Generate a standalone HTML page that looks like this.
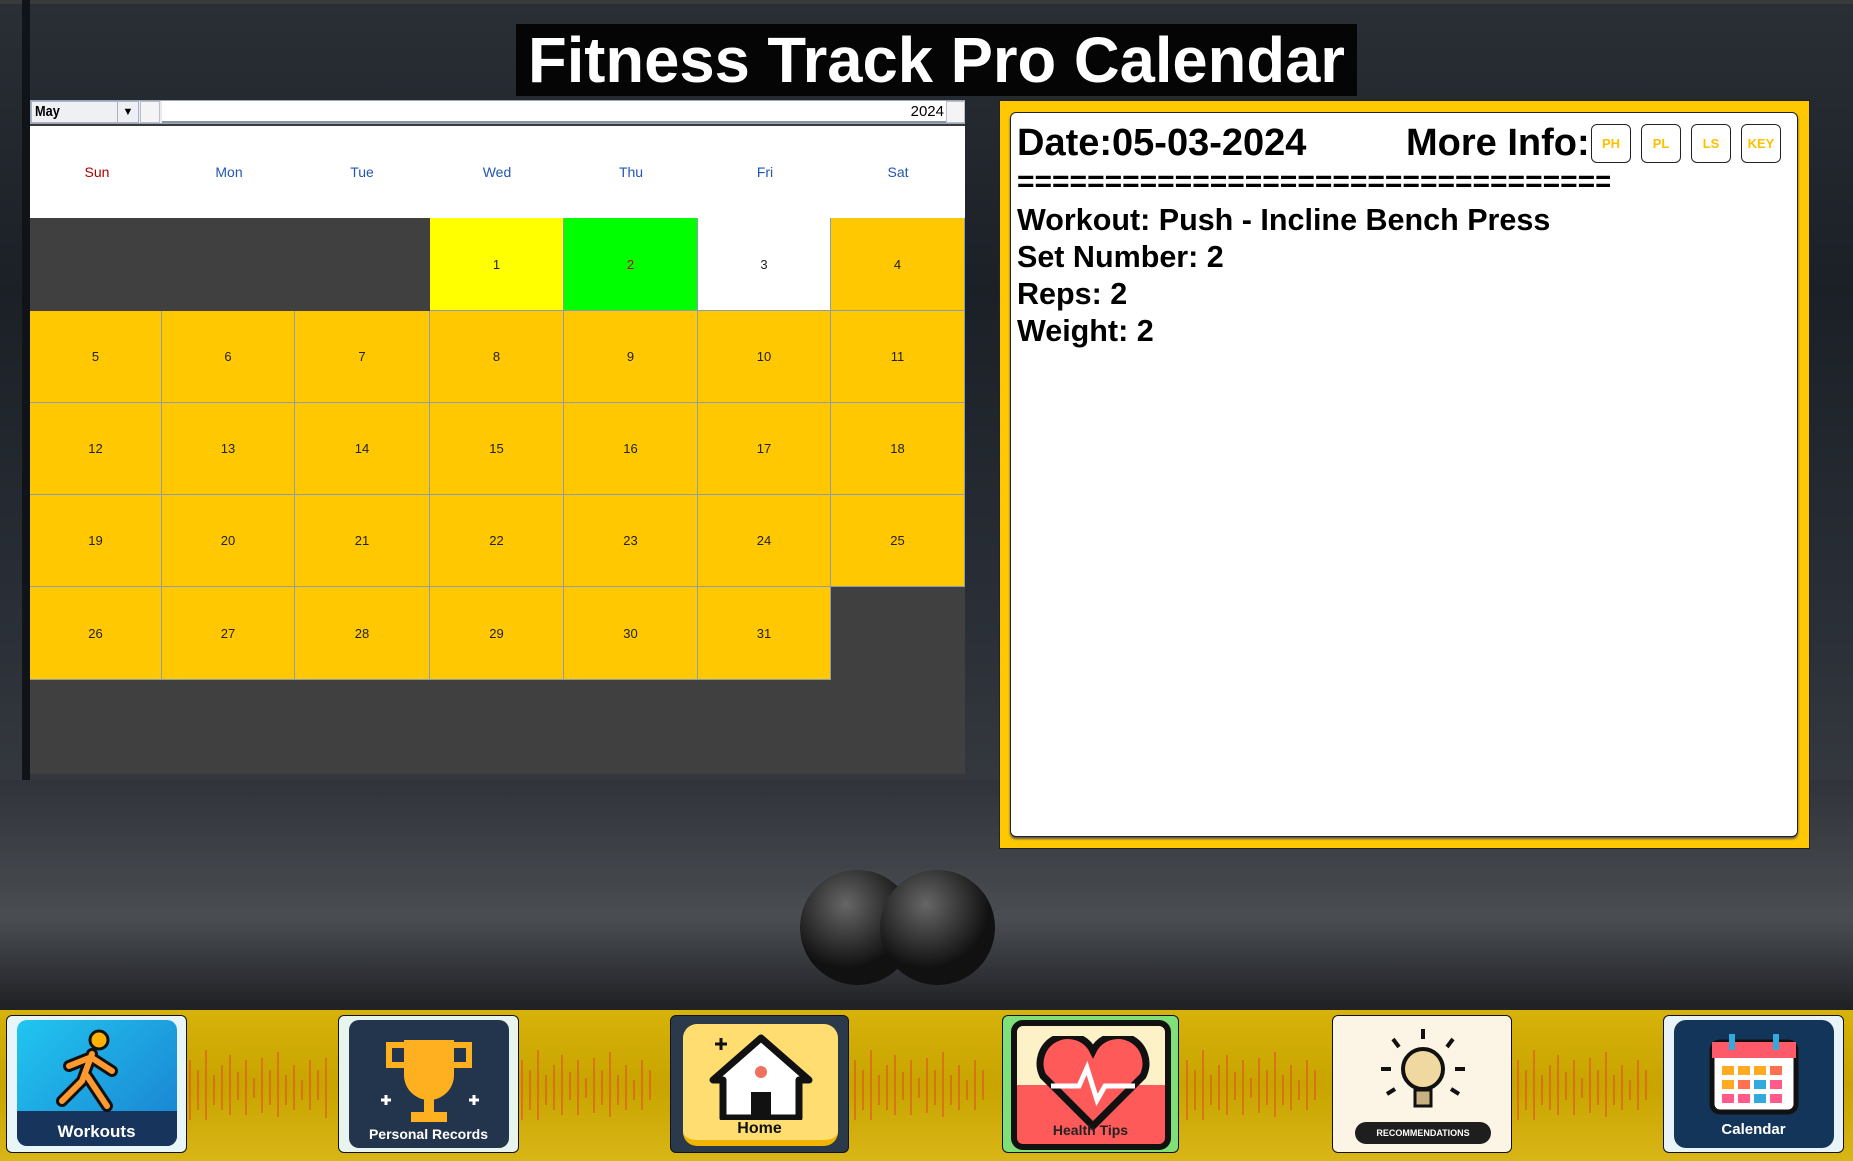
<!DOCTYPE html>
<html><head><meta charset="utf-8"><style>
*{margin:0;padding:0;box-sizing:border-box}
body{width:1853px;height:1161px;overflow:hidden;position:relative;font-family:"Liberation Sans",Arial,sans-serif;
background:linear-gradient(180deg,#2a2f36 0%,#1b2027 25%,#2b3038 55%,#3a3d42 75%,#505257 85%,#2a2c30 100%)}
.a{position:absolute}
.n{display:inline-block;transform-origin:left center}
.cell{position:absolute;background:#ffc800;border-right:1px solid #8d9bb0;border-bottom:1px solid #8d9bb0;font-size:13px;color:#222;display:flex;align-items:center;justify-content:center}
.dn{position:absolute;top:164px;font-size:14px;color:#2256b0;width:134px;text-align:center}
.btn{position:absolute;top:124px;width:40px;height:39px;border:1.5px solid #222;border-radius:6px;background:#fff;color:#ffc000;font-weight:bold;font-size:13px;display:flex;align-items:center;justify-content:center}
.info{position:absolute;left:1017px;font-weight:bold;color:#000;white-space:nowrap}
.tile{position:absolute;top:1015px;height:138px;border-radius:6px;overflow:hidden;border:1px solid #111}
.lab{position:absolute;bottom:10px;left:0;right:0;text-align:center;font-weight:bold;color:#fff;font-size:15px}
</style></head><body>
<div class="a" style="left:0;top:0;width:1853px;height:4px;background:#3a3a3a"></div>
<div class="a" style="left:22px;top:0;width:8px;height:1000px;background:#101318"></div>
<div class="a" style="left:0;top:780px;width:1853px;height:230px;background:linear-gradient(180deg,#30343a,#4a4d52 60%,#1e2024)"></div>
<div class="a" style="left:800px;top:870px;width:115px;height:115px;border-radius:50%;background:radial-gradient(circle at 40% 30%,#666,#111 60%)"></div>
<div class="a" style="left:880px;top:870px;width:115px;height:115px;border-radius:50%;background:radial-gradient(circle at 40% 30%,#666,#111 60%)"></div>
<!-- title -->
<div class="a" style="left:516px;top:24px;width:841px;height:72px;background:#050505"></div>
<div class="a" style="left:528px;top:20px;font-size:64px;font-weight:bold;color:#fff;white-space:nowrap;line-height:80px"><span class="n" style="transform:scaleX(0.99)">Fitness Track Pro Calendar</span></div>
<!-- calendar -->
<div class="a" style="left:30px;top:100px;width:935px;height:674px;background:#404040"></div>
<div class="a" style="left:30px;top:100px;width:935px;height:24px;background:#e8ecf2;border:1px solid #9aa6b8"></div>
<div class="a" style="left:31px;top:101px;width:90px;height:22px;background:#eef0f4;border:1px solid #a8b4c6;font-size:15px;font-weight:bold;line-height:20px;padding-left:3px"><span class="n" style="transform:scaleX(0.85)">May</span></div>
<div class="a" style="left:117px;top:101px;width:22px;height:22px;background:#eef0f4;border:1px solid #a8b4c6;font-size:11px;text-align:center;line-height:20px">▼</div>
<div class="a" style="left:140px;top:101px;width:20px;height:22px;background:#f4f4f4;border:1px solid #b8c0cc"></div>
<div class="a" style="left:162px;top:101px;width:784px;height:22px;background:#fff;border-bottom:2px solid #8a94a8;text-align:right;font-size:15px;line-height:22px;padding-right:2px">2024</div>
<div class="a" style="left:946px;top:101px;width:19px;height:22px;background:#f4f4f4;border:1px solid #b8c0cc"></div>
<div class="a" style="left:30px;top:124px;width:935px;height:94px;background:#fff;border-top:2px solid #3a3a3a"></div>
<div class="dn" style="left:30px;color:#b00000">Sun</div>
<div class="dn" style="left:162px">Mon</div>
<div class="dn" style="left:295px">Tue</div>
<div class="dn" style="left:430px">Wed</div>
<div class="dn" style="left:564px">Thu</div>
<div class="dn" style="left:698px">Fri</div>
<div class="dn" style="left:831px">Sat</div>
<div class="cell" style="left:430px;top:218px;width:134px;height:93px;background:#ffff00">1</div>
<div class="cell" style="left:564px;top:218px;width:134px;height:93px;background:#00ff00;color:#c00">2</div>
<div class="cell" style="left:698px;top:218px;width:133px;height:93px;background:#fff">3</div>
<div class="cell" style="left:831px;top:218px;width:134px;height:93px">4</div>

<div class="cell" style="left:30px;top:311px;width:132px;height:92px">5</div>
<div class="cell" style="left:162px;top:311px;width:133px;height:92px">6</div>
<div class="cell" style="left:295px;top:311px;width:135px;height:92px">7</div>
<div class="cell" style="left:430px;top:311px;width:134px;height:92px">8</div>
<div class="cell" style="left:564px;top:311px;width:134px;height:92px">9</div>
<div class="cell" style="left:698px;top:311px;width:133px;height:92px">10</div>
<div class="cell" style="left:831px;top:311px;width:134px;height:92px">11</div>

<div class="cell" style="left:30px;top:403px;width:132px;height:92px">12</div>
<div class="cell" style="left:162px;top:403px;width:133px;height:92px">13</div>
<div class="cell" style="left:295px;top:403px;width:135px;height:92px">14</div>
<div class="cell" style="left:430px;top:403px;width:134px;height:92px">15</div>
<div class="cell" style="left:564px;top:403px;width:134px;height:92px">16</div>
<div class="cell" style="left:698px;top:403px;width:133px;height:92px">17</div>
<div class="cell" style="left:831px;top:403px;width:134px;height:92px">18</div>

<div class="cell" style="left:30px;top:495px;width:132px;height:92px">19</div>
<div class="cell" style="left:162px;top:495px;width:133px;height:92px">20</div>
<div class="cell" style="left:295px;top:495px;width:135px;height:92px">21</div>
<div class="cell" style="left:430px;top:495px;width:134px;height:92px">22</div>
<div class="cell" style="left:564px;top:495px;width:134px;height:92px">23</div>
<div class="cell" style="left:698px;top:495px;width:133px;height:92px">24</div>
<div class="cell" style="left:831px;top:495px;width:134px;height:92px">25</div>

<div class="cell" style="left:30px;top:587px;width:132px;height:93px">26</div>
<div class="cell" style="left:162px;top:587px;width:133px;height:93px">27</div>
<div class="cell" style="left:295px;top:587px;width:135px;height:93px">28</div>
<div class="cell" style="left:430px;top:587px;width:134px;height:93px">29</div>
<div class="cell" style="left:564px;top:587px;width:134px;height:93px">30</div>
<div class="cell" style="left:698px;top:587px;width:133px;height:93px">31</div>
<!-- info panel -->
<div class="a" style="left:999px;top:100px;width:811px;height:749px;background:#ffc800;border:1px solid #222"></div>
<div class="a" style="left:1010px;top:112px;width:788px;height:725px;background:#fff;border:1.5px solid #222;border-radius:6px;box-shadow:0 2px 2px #555"></div>
<div class="info" style="top:118px;font-size:38px;line-height:50px"><span class="n" style="transform:scaleX(1.0)">Date:05-03-2024</span></div>
<div class="info" style="left:1406px;top:118px;font-size:38px;line-height:50px"><span class="n" style="transform:scaleX(1.0)">More Info:</span></div>
<div class="btn" style="left:1591px">PH</div>
<div class="btn" style="left:1641px">PL</div>
<div class="btn" style="left:1691px">LS</div>
<div class="btn" style="left:1741px">KEY</div>
<div class="info" style="top:165px;font-size:30px;line-height:34px;overflow:hidden;width:593px">===================================</div>
<div class="info" style="top:202px;font-size:30.5px;line-height:36px">Workout: Push - Incline Bench Press</div>
<div class="info" style="top:239px;font-size:30.5px;line-height:36px">Set Number: 2</div>
<div class="info" style="top:276px;font-size:30.5px;line-height:36px">Reps: 2</div>
<div class="info" style="top:313px;font-size:30.5px;line-height:36px">Weight: 2</div>
<!-- bottom bar -->
<div class="a" style="left:0;top:1008px;width:1853px;height:153px;background:linear-gradient(180deg,#d6b20a,#c9a400 50%,#d8b616);border-top:2px solid #222"></div>
<svg class="a" style="left:0;top:1030px" width="1853" height="110">
<g stroke="#e0402a" stroke-width="1.2" opacity="0.8">
<path d="M190 30v60M198 40v40M206 20v70M214 45v30M222 35v45M230 25v60M238 42v28M246 30v55M254 48v20M262 28v55M270 40v35M278 22v65M286 45v30M294 35v45M302 50v20M310 30v50M318 40v30M326 28v60"/>
<path d="M522 30v60M530 40v40M538 20v70M546 45v30M554 35v45M562 25v60M570 42v28M578 30v55M586 48v20M594 28v55M602 40v35M610 22v65M618 45v30M626 35v45M634 50v20M642 30v50M650 40v30"/>
<path d="M855 30v60M863 40v40M871 20v70M879 45v30M887 35v45M895 25v60M903 42v28M911 30v55M919 48v20M927 28v55M935 40v35M943 22v65M951 45v30M959 35v45M967 50v20M975 30v50M983 40v30"/>
<path d="M1187 30v60M1195 40v40M1203 20v70M1211 45v30M1219 35v45M1227 25v60M1235 42v28M1243 30v55M1251 48v20M1259 28v55M1267 40v35M1275 22v65M1283 45v30M1291 35v45M1299 50v20M1307 30v50M1315 40v30"/>
<path d="M1518 30v60M1526 40v40M1534 20v70M1542 45v30M1550 35v45M1558 25v60M1566 42v28M1574 30v55M1582 48v20M1590 28v55M1598 40v35M1606 22v65M1614 45v30M1622 35v45M1630 50v20M1638 30v50M1646 40v30"/>
</g></svg>
<div class="tile" style="left:6px;width:181px;background:#e8f6fa">
 <div class="a" style="left:10px;top:4px;width:160px;height:126px;border-radius:10px;background:linear-gradient(135deg,#21c6f0,#1a7fd0)"></div>
 <div class="a" style="left:10px;top:95px;width:160px;height:35px;background:#16345c;border-radius:0 0 10px 10px"></div>
 <svg class="a" style="left:40px;top:10px" width="90" height="90"><circle cx="52" cy="14" r="9" fill="#ffb300" stroke="#111" stroke-width="3"/><path d="M45 28 L35 55 L15 75 M40 50 L60 80 M45 32 L65 45 M42 32 L22 40" stroke="#111" stroke-width="12" fill="none" stroke-linecap="round"/><path d="M45 28 L35 55 L15 75 M40 50 L60 80 M45 32 L65 45 M42 32 L22 40" stroke="#ff9a30" stroke-width="6" fill="none" stroke-linecap="round"/></svg>
 <div class="lab" style="font-size:17px">Workouts</div></div>
<div class="tile" style="left:338px;width:181px;background:#e8f5ee">
 <div class="a" style="left:10px;top:4px;width:160px;height:128px;border-radius:10px;background:#23354d"></div>
 <svg class="a" style="left:30px;top:14px" width="120" height="100"><path d="M35 10h50v35a25 25 0 0 1-50 0z" fill="#ffb020"/><path d="M35 15h-15v20h15M85 15h15v20h-15" stroke="#ffb020" stroke-width="6" fill="none"/><rect x="55" y="68" width="10" height="14" fill="#ffb020"/><rect x="42" y="82" width="36" height="10" fill="#ffb020"/><path d="M12 70h10M17 65v10M100 70h10M105 65v10" stroke="#fff" stroke-width="3"/></svg>
 <div class="lab" style="font-size:14px">Personal Records</div></div>
<div class="tile" style="left:670px;width:179px;background:#2b3a4a">
 <div class="a" style="left:12px;top:8px;width:155px;height:122px;border-radius:14px;background:#ffdd70;border-bottom:6px solid #f2b400"></div>
 <svg class="a" style="left:30px;top:14px" width="120" height="90"><path d="M60 8 L12 50 L22 50 L22 88 L98 88 L98 50 L108 50 Z" fill="#fff" stroke="#111" stroke-width="7" stroke-linejoin="round"/><rect x="50" y="62" width="20" height="26" fill="#111"/><circle cx="60" cy="42" r="6" fill="#f07060"/><path d="M14 14h12M20 8v12" stroke="#111" stroke-width="3"/></svg>
 <div class="lab" style="color:#111;font-size:16px;bottom:14px">Home</div></div>
<div class="tile" style="left:1002px;width:177px;background:#7fe07a">
 <div class="a" style="left:8px;top:4px;width:160px;height:130px;border-radius:12px;background:linear-gradient(180deg,#fdf1c8 50%,#ff5a5a 50%);border:6px solid #111"></div>
 <svg class="a" style="left:30px;top:20px" width="120" height="95"><path d="M60 90 L10 40 A25 25 0 0 1 60 15 A25 25 0 0 1 110 40 Z" fill="#ff5a5a" stroke="#111" stroke-width="7"/><path d="M18 50h28l8-18 10 32 8-14h30" stroke="#fff" stroke-width="5" fill="none"/></svg>
 <div class="lab" style="color:#222;font-size:14px;bottom:14px">Health Tips</div></div>
<div class="tile" style="left:1332px;width:180px;background:#fcf4e4">
 <svg class="a" style="left:40px;top:8px" width="100" height="100"><circle cx="50" cy="45" r="20" fill="#f0d9a0" stroke="#111" stroke-width="4"/><rect x="42" y="66" width="16" height="16" fill="#c8b080" stroke="#111" stroke-width="3"/><path d="M50 5v10M20 15l6 8M80 15l-6 8M8 45h10M82 45h10M14 70l8-5M86 70l-8-5" stroke="#111" stroke-width="4"/></svg>
 <div class="a" style="left:22px;top:106px;width:136px;height:22px;border-radius:11px;background:#1e1e1e;color:#fff;font-size:9px;font-weight:bold;text-align:center;line-height:22px">RECOMMENDATIONS</div></div>
<div class="tile" style="left:1663px;width:181px;background:#e8f4f8">
 <div class="a" style="left:10px;top:4px;width:160px;height:128px;border-radius:12px;background:#14355a"></div>
 <svg class="a" style="left:40px;top:14px" width="100" height="85"><rect x="8" y="12" width="84" height="70" rx="8" fill="#fff" stroke="#111" stroke-width="5"/><rect x="8" y="12" width="84" height="16" fill="#ff5a6a"/><path d="M28 4v16M72 4v16" stroke="#3ad" stroke-width="6"/><g fill="#ffaa20"><rect x="18" y="36" width="12" height="9"/><rect x="34" y="36" width="12" height="9"/><rect x="50" y="36" width="12" height="9"/><rect x="66" y="36" width="12" height="9" fill="#ff7050"/></g><g><rect x="18" y="50" width="12" height="9" fill="#ffaa20"/><rect x="34" y="50" width="12" height="9" fill="#ff7050"/><rect x="50" y="50" width="12" height="9" fill="#3ad"/><rect x="66" y="50" width="12" height="9" fill="#ff5a8a"/><rect x="18" y="64" width="12" height="9" fill="#ff5a8a"/><rect x="34" y="64" width="12" height="9" fill="#ff5a8a"/><rect x="50" y="64" width="12" height="9" fill="#3ad"/><rect x="66" y="64" width="12" height="9" fill="#ff5a8a"/></g></svg>
 <div class="lab" style="font-size:15px;bottom:14px">Calendar</div></div>
</body></html>
